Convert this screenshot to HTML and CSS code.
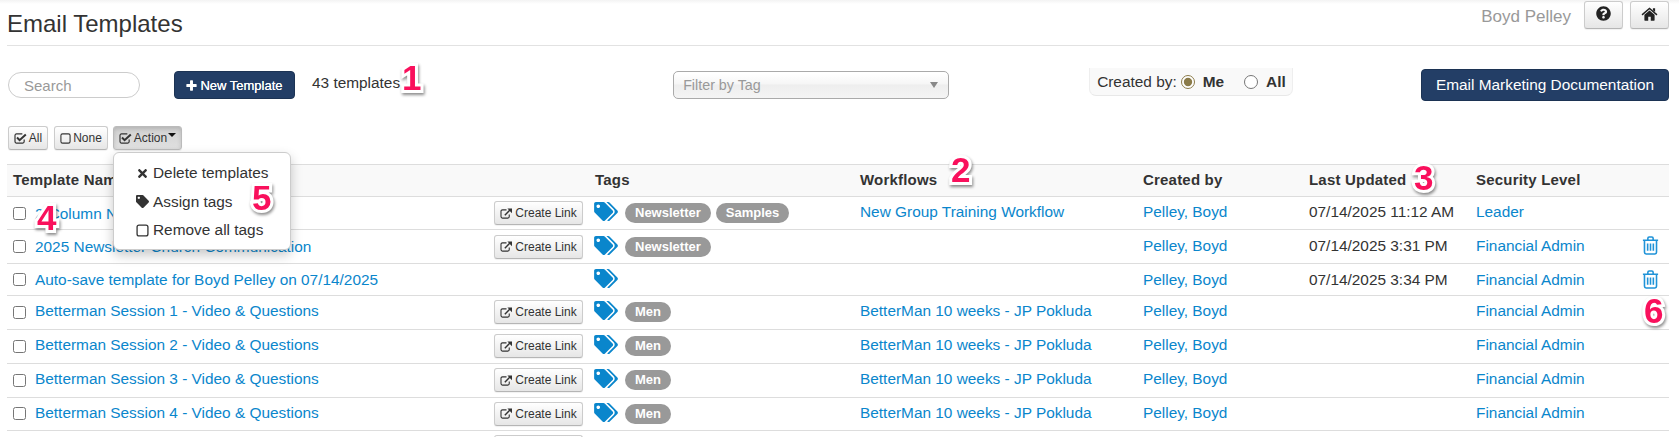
FILE: index.html
```html
<!DOCTYPE html>
<html lang="en">
<head>
<meta charset="utf-8">
<title>Email Templates</title>
<link rel="stylesheet" href="styles.css">
</head>
<body>
<svg class="defs" width="0" height="0" aria-hidden="true">
  <symbol id="i-tags" viewBox="0 0 640 512"><path d="M497.941 225.941L286.059 14.059A48 48 0 0 0 252.118 0H48C21.49 0 0 21.49 0 48v204.118a48 48 0 0 0 14.059 33.941l211.882 211.882c18.744 18.745 49.136 18.746 67.882 0l204.118-204.118c18.745-18.745 18.745-49.137 0-67.882zM112 160c-26.51 0-48-21.49-48-48s21.49-48 48-48 48 21.49 48 48-21.49 48-48 48zm513.941 133.823L421.823 497.941c-18.745 18.745-49.137 18.745-67.882 0l-.36-.36L527.64 323.522c16.999-16.999 26.36-39.6 26.36-63.64s-9.362-46.641-26.36-63.64L331.397 0h48.721a48 48 0 0 1 33.941 14.059l211.882 211.882c18.745 18.745 18.745 49.137 0 67.882z"/></symbol>
  <symbol id="i-tag" viewBox="0 0 512 512"><path d="M0 252.118V48C0 21.49 21.49 0 48 0h204.118a48 48 0 0 1 33.941 14.059l211.882 211.882c18.745 18.745 18.745 49.137 0 67.882L293.823 497.941c-18.745 18.745-49.137 18.745-67.882 0L14.059 286.059A48 48 0 0 1 0 252.118zM112 64c-26.51 0-48 21.49-48 48s21.49 48 48 48 48-21.49 48-48-21.49-48-48-48z"/></symbol>
  <symbol id="i-times" viewBox="0 0 352 512"><path d="M242.72 256l100.07-100.07c12.28-12.28 12.28-32.19 0-44.48l-22.24-22.24c-12.28-12.28-32.19-12.28-44.48 0L176 189.28 75.93 89.21c-12.28-12.28-32.19-12.28-44.48 0L9.21 111.45c-12.28 12.28-12.28 32.19 0 44.48L109.28 256 9.21 356.07c-12.28 12.28-12.28 32.19 0 44.48l22.24 22.24c12.28 12.28 32.2 12.28 44.48 0L176 322.72l100.07 100.07c12.28 12.28 32.2 12.28 44.48 0l22.24-22.24c12.28-12.28 12.28-32.19 0-44.48L242.72 256z"/></symbol>
  <symbol id="i-help" viewBox="0 0 512 512"><path d="M504 256c0 136.997-111.043 248-248 248S8 392.997 8 256C8 119.083 119.043 8 256 8s248 111.083 248 248zM262.655 90c-54.497 0-89.255 22.957-116.549 63.758-3.536 5.286-2.353 12.415 2.715 16.258l34.699 26.31c5.205 3.947 12.621 3.008 16.665-2.122 17.864-22.658 30.113-35.797 57.303-35.797 20.429 0 45.698 13.148 45.698 32.958 0 14.976-12.363 22.667-32.534 33.976C247.128 238.528 216 254.941 216 296v4c0 6.627 5.373 12 12 12h56c6.627 0 12-5.373 12-12v-1.333c0-28.462 83.186-29.647 83.186-106.667 0-58.002-60.165-102-116.531-102zM256 338c-25.365 0-46 20.635-46 46 0 25.364 20.635 46 46 46s46-20.636 46-46c0-25.365-20.635-46-46-46z"/></symbol>
  <symbol id="i-home" viewBox="0 0 20 16"><path d="M4 9 10 4l6 5v6.2a.6.6 0 0 1-.6.6h-3.9v-4.6h-3v4.6H4.6a.6.6 0 0 1-.6-.6z"/><path d="M14 1.2h2.6v4.4L14 3.6z"/><path d="M1.2 9 10 1.6 18.8 9" fill="none" stroke="currentColor" stroke-width="1.7"/></symbol>
  <symbol id="i-plus" viewBox="0 0 12 12"><path d="M4.4 1a.6.6 0 0 1 .6-.6h2a.6.6 0 0 1 .6.6v3.4H11a.6.6 0 0 1 .6.6v2a.6.6 0 0 1-.6.6H7.6V11a.6.6 0 0 1-.6.6H5a.6.6 0 0 1-.6-.6V7.600H1A.6.6 0 0 1 .4 7V5A.6.6 0 0 1 1 4.400h3.400z"/></symbol>
  <symbol id="i-check" viewBox="0 0 14 12"><path d="M11 7v2.400A1.600 1.600 0 0 1 9.400 11H2.600A1.600 1.600 0 0 1 1 9.400V2.600A1.600 1.600 0 0 1 2.600 1H9" fill="none" stroke="currentColor" stroke-width="1.300"/><path d="M3.200 5 6 7.800 12.800 1.600" fill="none" stroke="currentColor" stroke-width="2.200"/></symbol>
  <symbol id="i-square" viewBox="0 0 12 12"><rect x="1" y="1" width="10" height="10" rx="1.800" fill="none" stroke="currentColor" stroke-width="1.200"/></symbol>
  <symbol id="i-link" viewBox="0 0 14 12"><path d="M10 7v2.400A1.600 1.600 0 0 1 8.400 11H2.600A1.600 1.600 0 0 1 1 9.400V3.600A1.600 1.600 0 0 1 2.600 2H7" fill="none" stroke="currentColor" stroke-width="1.200"/><path d="M5.200 7.800 11 2" fill="none" stroke="currentColor" stroke-width="1.600"/><path d="M8 .6h5V5.600z"/></symbol>
  <symbol id="i-trash" viewBox="0 0 16 18"><path d="M.8 4h14.400M5.500 4V2.200A1.200 1.200 0 0 1 6.700 1h2.600a1.200 1.200 0 0 1 1.200 1.200V4M2.300 4v11.500A1.500 1.500 0 0 0 3.800 17h8.400a1.500 1.500 0 0 0 1.500-1.500V4M5.300 7v7M8 7v7M10.700 7v7" fill="none" stroke="currentColor" stroke-width="1.500"/></symbol>
</svg>

<div class="page">
  <header class="topbar">
    <h1 class="title">Email Templates</h1>
    <div class="user">
      <span class="user-name">Boyd Pelley</span>
      <button class="btn icon-btn help"><svg class="ic-help"><use href="#i-help"/></svg></button>
      <button class="btn icon-btn home"><svg class="ic-home"><use href="#i-home"/></svg></button>
    </div>
  </header>

  <section class="toolbar">
    <input class="search" type="text" placeholder="Search">
    <button class="primary new"><svg class="ic-plus"><use href="#i-plus"/></svg>New Template</button>
    <span class="count">43 templates<b class="mark mark-1">1</b></span>
    <div class="filter"><span>Filter by Tag</span><i class="filter-arrow"></i></div>
    <div class="created">
      <span>Created by:</span>
      <label class="opt"><input type="radio" name="by" checked><b>Me</b></label>
      <label class="opt opt-all"><input type="radio" name="by"><b>All</b></label>
    </div>
    <button class="primary docs">Email Marketing Documentation</button>
  </section>

  <section class="actions">
    <button class="btn small all"><svg class="ic-small"><use href="#i-check"/></svg>All</button>
    <button class="btn small none"><svg class="ic-sq"><use href="#i-square"/></svg>None</button>
    <div class="action-wrap">
      <button class="btn small action"><svg class="ic-small"><use href="#i-check"/></svg>Action<i class="caret"></i></button>
      <ul class="menu">
        <li><svg class="ic-menu"><use href="#i-times"/></svg>Delete templates</li>
        <li><svg class="ic-menu"><use href="#i-tag"/></svg>Assign tags<b class="mark mark-5">5</b></li>
        <li><svg class="ic-menu"><use href="#i-square"/></svg>Remove all tags</li>
      </ul>
    </div>
  </section>

  <table class="grid">
    <colgroup>
      <col class="c-name"><col class="c-tags"><col class="c-flow"><col class="c-by"><col class="c-date"><col class="c-sec"><col class="c-del">
    </colgroup>
    <thead>
      <tr>
        <th>Template Name</th>
        <th>Tags</th>
        <th><span class="rel">Workflows<b class="mark mark-2">2</b></span></th>
        <th>Created by</th>
        <th><span class="rel">Last Updated<b class="mark mark-3">3</b></span></th>
        <th>Security Level</th>
        <th></th>
      </tr>
    </thead>
    <tbody>
      <tr class="r33 top">
        <td><div class="name"><input type="checkbox"><a href="#">2-Column Newsletter</a><b class="mark mark-4">4</b><button class="btn small link"><svg class="ic-small"><use href="#i-link"/></svg>Create Link</button></div></td>
        <td><div class="tags"><svg class="ic-tags"><use href="#i-tags"/></svg><span class="pill">Newsletter</span><span class="pill">Samples</span></div></td>
        <td><a href="#">New Group Training Workflow</a></td>
        <td><a href="#">Pelley, Boyd</a></td>
        <td>07/14/2025 11:12 AM</td>
        <td><a href="#">Leader</a></td>
        <td></td>
      </tr>
      <tr class="top">
        <td><div class="name"><input type="checkbox"><a href="#">2025 Newsletter Church Communication</a><button class="btn small link"><svg class="ic-small"><use href="#i-link"/></svg>Create Link</button></div></td>
        <td><div class="tags"><svg class="ic-tags"><use href="#i-tags"/></svg><span class="pill">Newsletter</span></div></td>
        <td></td>
        <td><a href="#">Pelley, Boyd</a></td>
        <td>07/14/2025 3:31 PM</td>
        <td><a href="#">Financial Admin</a></td>
        <td><svg class="ic-trash"><use href="#i-trash"/></svg></td>
      </tr>
      <tr class="r32">
        <td><div class="name"><input type="checkbox"><a href="#">Auto-save template for Boyd Pelley on 07/14/2025</a></div></td>
        <td><div class="tags"><svg class="ic-tags"><use href="#i-tags"/></svg></div></td>
        <td></td>
        <td><a href="#">Pelley, Boyd</a></td>
        <td>07/14/2025 3:34 PM</td>
        <td><a href="#">Financial Admin</a></td>
        <td><svg class="ic-trash"><use href="#i-trash"/></svg></td>
      </tr>
      <tr>
        <td><div class="name"><input type="checkbox"><a href="#">Betterman Session 1 - Video &amp; Questions</a><button class="btn small link"><svg class="ic-small"><use href="#i-link"/></svg>Create Link</button></div></td>
        <td><div class="tags"><svg class="ic-tags"><use href="#i-tags"/></svg><span class="pill">Men</span></div></td>
        <td><a href="#">BetterMan 10 weeks - JP Pokluda</a></td>
        <td><a href="#">Pelley, Boyd</a></td>
        <td></td>
        <td><a href="#">Financial Admin</a></td>
        <td class="rel"><b class="mark mark-6">6</b></td>
      </tr>
      <tr>
        <td><div class="name"><input type="checkbox"><a href="#">Betterman Session 2 - Video &amp; Questions</a><button class="btn small link"><svg class="ic-small"><use href="#i-link"/></svg>Create Link</button></div></td>
        <td><div class="tags"><svg class="ic-tags"><use href="#i-tags"/></svg><span class="pill">Men</span></div></td>
        <td><a href="#">BetterMan 10 weeks - JP Pokluda</a></td>
        <td><a href="#">Pelley, Boyd</a></td>
        <td></td>
        <td><a href="#">Financial Admin</a></td>
        <td></td>
      </tr>
      <tr>
        <td><div class="name"><input type="checkbox"><a href="#">Betterman Session 3 - Video &amp; Questions</a><button class="btn small link"><svg class="ic-small"><use href="#i-link"/></svg>Create Link</button></div></td>
        <td><div class="tags"><svg class="ic-tags"><use href="#i-tags"/></svg><span class="pill">Men</span></div></td>
        <td><a href="#">BetterMan 10 weeks - JP Pokluda</a></td>
        <td><a href="#">Pelley, Boyd</a></td>
        <td></td>
        <td><a href="#">Financial Admin</a></td>
        <td></td>
      </tr>
      <tr class="r33">
        <td><div class="name"><input type="checkbox"><a href="#">Betterman Session 4 - Video &amp; Questions</a><button class="btn small link"><svg class="ic-small"><use href="#i-link"/></svg>Create Link</button></div></td>
        <td><div class="tags"><svg class="ic-tags"><use href="#i-tags"/></svg><span class="pill">Men</span></div></td>
        <td><a href="#">BetterMan 10 weeks - JP Pokluda</a></td>
        <td><a href="#">Pelley, Boyd</a></td>
        <td></td>
        <td><a href="#">Financial Admin</a></td>
        <td></td>
      </tr>
      <tr>
        <td><div class="name"><button class="btn small link"></button></div></td>
        <td></td><td></td><td></td><td></td><td></td><td></td>
      </tr>
    </tbody>
  </table>
</div>
</body>
</html>
```

FILE: styles.css
```css
* { box-sizing: border-box; }
html, body { margin: 0; height: 437px; overflow: hidden; }
body {
  background: linear-gradient(#f3f3f3, #fff 4px) no-repeat;
  color: #333;
  font: 15.4px/20px "Liberation Sans", Arial, sans-serif;
}
.defs { position: absolute; }
a { color: #0a86cc; text-decoration: none; }
svg { fill: currentColor; flex: none; }

.page { padding: 0 10px 0 7px; }

/* top bar */
.topbar {
  display: flex;
  justify-content: space-between;
  height: 46px;
  border-bottom: 1px solid #e2e2e2;
}
.title { margin: 10px 0 0; font-size: 24px; font-weight: 400; line-height: 27px; }
.user { display: flex; align-items: flex-start; padding-top: 1px; }
.user-name { margin: 5px 13px 0 0; color: #999; font-size: 17px; line-height: 22px; }

/* buttons */
.btn {
  display: inline-flex;
  align-items: center;
  justify-content: center;
  padding: 0;
  border: 1px solid #ccc;
  border-bottom-color: #b5b5b5;
  border-radius: 3px;
  background: linear-gradient(#fff, #e6e6e6);
  box-shadow: 0 1px 1px rgba(0, 0, 0, .06);
  color: #333;
  font: 12px/16px "Liberation Sans", Arial, sans-serif;
}
.icon-btn { height: 28px; color: #222; }
.help { width: 39px; margin-right: 7px; }
.home { width: 39px; }
.ic-help { width: 15px; height: 15px; margin-top: -3px; }
.ic-home { width: 17px; height: 14px; margin-top: -3px; }

.primary {
  border: 1px solid #1c3354;
  border-radius: 4px;
  background: #233e66;
  color: #fff;
  font-family: "Liberation Sans", Arial, sans-serif;
  padding: 0;
}

/* toolbar */
.toolbar { display: flex; align-items: flex-start; height: 80px; padding-top: 22px; }
.search {
  width: 132px;
  height: 26px;
  margin: 4px 0 0 1px;
  padding: 0 15px;
  border: 1px solid #ccc;
  border-radius: 13px;
  font: 15px "Liberation Sans", Arial, sans-serif;
}
.search::placeholder { color: #999; opacity: 1; }
.new {
  display: flex;
  align-items: center;
  justify-content: center;
  width: 121px;
  height: 28px;
  margin: 3px 0 0 34px;
  font-size: 13px;
  text-shadow: 0 0 .4px #fff;
}
.ic-plus { width: 11px; height: 11px; margin-right: 3px; }
.count { position: relative; margin: 5px 0 0 17px; line-height: 20px; }
.filter {
  display: flex;
  align-items: center;
  justify-content: space-between;
  width: 276px;
  height: 28px;
  margin: 3px 0 0 273px;
  padding: 0 10px 0 9px;
  border: 1px solid #aaa;
  border-radius: 5px;
  background: linear-gradient(#fff, #fff 5%, #f6f6f6 45%, #eee 50%, #f4f4f4 100%);
  color: #999;
  font-size: 14.3px;
}
.filter-arrow {
  width: 0;
  height: 0;
  border: 4px solid transparent;
  border-top: 6px solid #888;
  border-bottom: 0;
}
.created {
  display: flex;
  align-items: center;
  width: 204px;
  height: 28px;
  margin-left: 140px;
  padding-left: 7px;
  border-bottom: 1px solid #e8e8e8;
  border-right: 1px solid #eee;
  border-left: 1px solid #eee;
  border-radius: 0 0 7px 7px;
  background: #f9f9f9;
}
.opt { display: flex; align-items: center; }
.opt input { width: 14px; height: 14px; margin: 0 8px 0 4px; accent-color: #8a7a48; }
.opt b { color: #333; }
.opt-all { margin-left: 20px; }
.opt-all input { margin-left: 0; margin-right: 8px; }
.docs {
  width: 248px;
  height: 32px;
  margin: 1px 0 0 auto;
  font-size: 15.4px;
}

/* action row */
.actions { display: flex; align-items: flex-start; height: 38px; padding-left: 1px; }
.small { height: 24px; }
.all { width: 40px; margin-right: 6px; }
.none { width: 54px; margin-right: 5px; }
.action-wrap { position: relative; }
.action {
  width: 69px;
  border-color: #bbb;
  background: linear-gradient(#d2d2d2, #e0e0e0);
  box-shadow: inset 0 2px 4px rgba(0, 0, 0, .15), 0 1px 1px rgba(0, 0, 0, .08);
}
.ic-small { width: 13px; height: 11px; margin-right: 2px; }
.ic-sq { width: 11px; height: 11px; margin-right: 2px; }
.caret {
  width: 0;
  height: 0;
  margin: -6px 0 0 1px;
  border: 4px solid transparent;
  border-top: 4px solid #111;
  border-bottom: 0;
}
.menu {
  position: absolute;
  z-index: 5;
  top: 26px;
  left: 0;
  width: 178px;
  height: 98px;
  margin: 0;
  padding: 6px 0 0 22px;
  list-style: none;
  border: 1px solid #ccc;
  border-radius: 6px;
  background: #fff;
  box-shadow: 0 5px 12px rgba(0, 0, 0, .22);
  font-size: 15.4px;
}
.menu li { position: relative; display: flex; align-items: center; height: 28.500px; }
.ic-menu { width: 13px; height: 13px; margin-right: 4px; }

/* table */
.grid { width: 1662px; table-layout: fixed; border-collapse: collapse; }
.c-name { width: 583px; }
.c-tags { width: 264px; }
.c-flow { width: 283px; }
.c-by { width: 166px; }
.c-date { width: 167px; }
.c-sec { width: 163px; }
.c-del { width: 36px; }
.grid th {
  height: 32px;
  padding: 0 6px 2px;
  border-top: 1px solid #ddd;
  border-bottom: 1px solid #ddd;
  background: #f9f9f9;
  font-size: 15px;
  font-weight: 700;
  letter-spacing: .2px;
  text-align: left;
}
.grid th:nth-child(2) { padding-left: 5px; }
.grid td { height: 34px; padding: 0 6px 3px; border-bottom: 1px solid #ddd; white-space: nowrap; }
.grid .top td { padding-bottom: 2px; }
.grid .r33 td { height: 33px; }
.grid .r32 td { height: 32px; padding-bottom: 0; }
.name { position: relative; display: flex; align-items: center; margin-bottom: -2px; padding-right: 1px; }
.name input { width: 13px; height: 13px; margin: 0 9px 0 0; }
.name a { margin-top: -2px; }
.top .name a { margin-top: 1px; }
.r32 .name { margin-bottom: 0; }
.r32 .name a { margin-top: 0; }
.link { width: 89px; margin-left: auto; }
.tags { display: flex; align-items: center; margin-bottom: -2px; }
.r32 .tags { margin-bottom: 0; }
.ic-tags { width: 24px; height: 19px; margin: -3px 7px 0 -2px; color: #0a86cc; }
.pill {
  height: 20px;
  margin-right: 5px;
  padding: 0 10px;
  border-radius: 10px;
  background: #999;
  color: #fff;
  font-size: 13px;
  font-weight: 700;
  line-height: 20px;
}
.ic-trash { display: block; width: 17px; height: 19px; margin-left: 3px; color: #1f93d8; }

/* numbered callouts */
.rel { position: relative; }
.mark {
  position: absolute;
  z-index: 8;
  color: #f9105c;
  font-family: "Liberation Sans", Arial, sans-serif;
  font-size: 35px;
  font-weight: 700;
  line-height: 32px;
  letter-spacing: 0;
  -webkit-text-stroke: 6px #fff;
  paint-order: stroke fill;
  filter: drop-shadow(1px 2px 1.5px rgba(0, 0, 0, .45));
}
.mark-1 { top: -11px; left: 90px; }
.mark-2 { top: -17px; left: 91px; }
.mark-3 { top: -9px; left: 105px; }
.mark-4 { top: 1px; left: 24px; }
.mark-5 { top: -6px; left: 116px; }
.mark-6 { top: -1px; left: 11px; }
```
